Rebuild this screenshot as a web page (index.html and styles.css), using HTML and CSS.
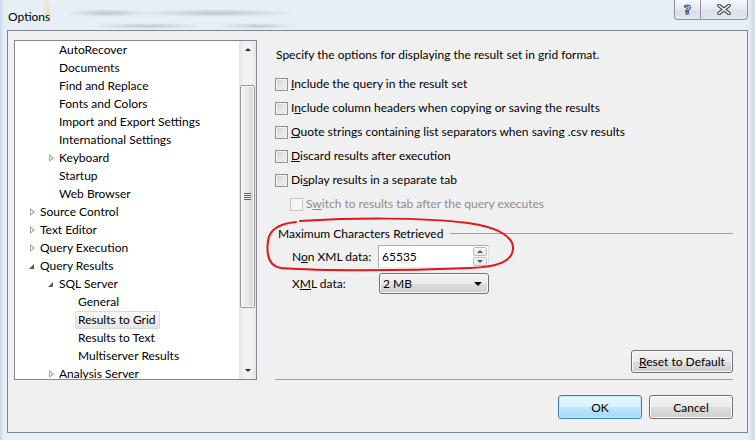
FILE: index.html
```html
<!DOCTYPE html>
<html lang="en">
<head>
    <meta charset="UTF-8">
    <title>Options</title>
    <link rel="stylesheet" href="styles.css">
</head>
<body>
    <div class="window">
        <div class="titlebar">
            <span class="title">Options</span>
            <div class="caption-buttons">
                <span class="cap help">?</span>
                <span class="cap close">
                    <svg width="14" height="11" viewBox="0 0 14 11">
                        <path d="M2 1.5 L12 9.5 M12 1.5 L2 9.5" stroke="#3b4452" stroke-width="3.6" stroke-linecap="round"/>
                        <path d="M2 1.5 L12 9.5 M12 1.5 L2 9.5" stroke="#ffffff" stroke-width="1.6" stroke-linecap="round"/>
                    </svg>
                </span>
            </div>
        </div>

        <div class="client">
            <div class="main">
                <div class="tree">
                    <ul class="nodes">
                        <li class="node l2"><span class="twist"></span><span class="text">AutoRecover</span></li>
                        <li class="node l2"><span class="twist"></span><span class="text">Documents</span></li>
                        <li class="node l2"><span class="twist"></span><span class="text">Find and Replace</span></li>
                        <li class="node l2"><span class="twist"></span><span class="text">Fonts and Colors</span></li>
                        <li class="node l2"><span class="twist"></span><span class="text">Import and Export Settings</span></li>
                        <li class="node l2"><span class="twist"></span><span class="text">International Settings</span></li>
                        <li class="node l2"><span class="twist closed"></span><span class="text">Keyboard</span></li>
                        <li class="node l2"><span class="twist"></span><span class="text">Startup</span></li>
                        <li class="node l2"><span class="twist"></span><span class="text">Web Browser</span></li>
                        <li class="node l1"><span class="twist closed"></span><span class="text">Source Control</span></li>
                        <li class="node l1"><span class="twist closed"></span><span class="text">Text Editor</span></li>
                        <li class="node l1"><span class="twist closed"></span><span class="text">Query Execution</span></li>
                        <li class="node l1"><span class="twist open"></span><span class="text">Query Results</span></li>
                        <li class="node l2"><span class="twist open"></span><span class="text">SQL Server</span></li>
                        <li class="node l3"><span class="twist"></span><span class="text">General</span></li>
                        <li class="node l3"><span class="twist"></span><span class="text selected">Results to Grid</span></li>
                        <li class="node l3"><span class="twist"></span><span class="text">Results to Text</span></li>
                        <li class="node l3"><span class="twist"></span><span class="text">Multiserver Results</span></li>
                        <li class="node l2"><span class="twist closed"></span><span class="text">Analysis Server</span></li>
                    </ul>
                    <div class="scrollbar">
                        <div class="sb-btn"><span class="arrow-up"></span></div>
                        <div class="sb-track">
                            <div class="thumb"><span class="grip"></span></div>
                        </div>
                        <div class="sb-btn"><span class="arrow-down"></span></div>
                    </div>
                </div>

                <div class="panel">
                    <p class="intro">Specify the options for displaying the result set in grid format.</p>

                    <label class="check"><span class="box"></span><span><u>I</u>nclude the query in the result set</span></label>
                    <label class="check"><span class="box"></span><span>I<u>n</u>clude column headers when copying or saving the results</span></label>
                    <label class="check"><span class="box"></span><span><u>Q</u>uote strings containing list separators when saving .csv results</span></label>
                    <label class="check"><span class="box"></span><span><u>D</u>iscard results after execution</span></label>
                    <label class="check"><span class="box"></span><span>Di<u>s</u>play results in a separate tab</span></label>
                    <label class="check sub disabled"><span class="box"></span><span>S<u>w</u>itch to results tab after the query executes</span></label>

                    <div class="group">
                        <div class="group-title"><span>Maximum Characters Retrieved</span><span class="rule"></span></div>
                        <div class="field">
                            <span class="field-label">N<u>o</u>n XML data:</span>
                            <div class="spin">
                                <span class="spin-value">65535</span>
                                <div class="spin-btns">
                                    <span class="spin-btn"><span class="tri-up"></span></span>
                                    <span class="spin-btn"><span class="tri-down"></span></span>
                                </div>
                            </div>
                        </div>
                        <div class="field">
                            <span class="field-label">X<u>M</u>L data:</span>
                            <div class="combo">
                                <span>2 MB</span>
                                <span class="combo-arrow"></span>
                            </div>
                        </div>
                    </div>

                    <div class="reset-row">
                        <button class="btn reset"><u>R</u>eset to Default</button>
                    </div>
                </div>
            </div>

            <div class="footer">
                <button class="btn ok">OK</button>
                <button class="btn">Cancel</button>
            </div>
        </div>

        <svg class="scribble" width="755" height="440" viewBox="0 0 755 440">
            <path d="M300 221 C350 218 420 217 468 223 C498 227 514 237 513 249 C512 261 499 267 470 268 C400 271 320 271 281 268 C269 266 266 256 268 241 C269 231 276 224 296 222"
                  fill="none" stroke="#e3141c" stroke-width="2" stroke-linecap="round"/>
        </svg>
    </div>
</body>
</html>
```

FILE: styles.css
```css
* {
    box-sizing: border-box;
    margin: 0;
    padding: 0;
}

body {
    width: 755px;
    height: 440px;
    overflow: hidden;
    font-family: Lato, "Liberation Sans", sans-serif;
    font-size: 12px;
    color: #000;
}

.window {
    position: relative;
    width: 755px;
    height: 440px;
    padding: 0 7px 7px;
    background:
        linear-gradient(to right, #c9d9ec 0, #e8eef6 4px, #e8eef6 748px, #c9d9ec 755px),
        #dfe8f3;
}

/* title bar with the blurred glass behind it */
.titlebar {
    display: flex;
    justify-content: space-between;
    height: 30px;
    background:
        radial-gradient(ellipse 4px 16px at 40px 12px, rgba(236, 214, 120, 0.55), transparent),
        radial-gradient(ellipse 42px 4px at 100px 13px, rgba(110, 120, 135, 0.35), transparent),
        radial-gradient(ellipse 80px 4px at 210px 13px, rgba(110, 120, 135, 0.35), transparent),
        radial-gradient(ellipse 60px 3px at 140px 26px, rgba(110, 120, 135, 0.3), transparent),
        radial-gradient(ellipse 40px 3px at 250px 26px, rgba(110, 120, 135, 0.3), transparent);
}

.title {
    padding: 9px 0 0 1px;
    font-size: 12px;
    line-height: 15px;
}

.caption-buttons {
    display: flex;
    height: 20px;
}

.cap {
    display: flex;
    align-items: center;
    justify-content: center;
    height: 20px;
    border: 1px solid #8b939e;
    border-top: none;
    background: linear-gradient(#f5f7fa, #e4e9ef 50%, #d8dfe7 51%, #e2e8ee);
}

.help {
    width: 26px;
    border-right: none;
    border-bottom-left-radius: 4px;
    font-family: "DejaVu Sans", sans-serif;
    font-size: 13px;
    font-weight: bold;
    color: #fff;
    -webkit-text-stroke: 1px #3b4452;
}

.close {
    width: 48px;
    border-bottom-right-radius: 4px;
}

.client {
    display: flex;
    flex-direction: column;
    height: 403px;
    padding: 9px 14px 13px 6px;
    border: 1px solid #7d8590;
    background: #f0f0f0;
}

.main {
    display: flex;
    height: 340px;
}

/* tree view */
.tree {
    display: flex;
    width: 243px;
    height: 340px;
    border: 1px solid #828790;
    background: #fff;
}

.nodes {
    flex: 1;
    list-style: none;
    overflow: hidden;
}

.node {
    display: flex;
    align-items: center;
    height: 18px;
    white-space: nowrap;
}

.l1 { padding-left: 9px; }
.l2 { padding-left: 28px; }
.l3 { padding-left: 47px; }

.twist {
    position: relative;
    width: 16px;
    height: 16px;
    flex-shrink: 0;
}

.twist.closed::before {
    content: "";
    position: absolute;
    left: 6px;
    top: 4px;
    border-left: 5px solid #a6a6a6;
    border-top: 4px solid transparent;
    border-bottom: 4px solid transparent;
}

.twist.closed::after {
    content: "";
    position: absolute;
    left: 7px;
    top: 6px;
    border-left: 2px solid #fff;
    border-top: 2px solid transparent;
    border-bottom: 2px solid transparent;
}

.twist.open::before {
    content: "";
    position: absolute;
    left: 5px;
    top: 6px;
    border-right: 5px solid #595959;
    border-top: 5px solid transparent;
}

.text {
    line-height: 16px;
    padding: 0 2px 0 0;
}

.selected {
    margin-left: -3px;
    padding: 0 3px 0 2px;
    border: 1px solid #d9d9d9;
    border-radius: 2px;
    background: linear-gradient(#f8f8f8, #e5e5e5);
}

/* scroll bar */
.scrollbar {
    display: flex;
    flex-direction: column;
    width: 17px;
    background: linear-gradient(to right, #e3e3e3, #f2f2f2 30%, #f2f2f2 70%, #e6e6e6);
}

.sb-btn {
    display: flex;
    align-items: center;
    justify-content: center;
    height: 17px;
}

.arrow-up {
    border-bottom: 3px solid #2b2b2b;
    border-left: 3.5px solid transparent;
    border-right: 3.5px solid transparent;
}

.arrow-down {
    border-top: 3px solid #2b2b2b;
    border-left: 3.5px solid transparent;
    border-right: 3.5px solid transparent;
}

.sb-track {
    flex: 1;
    padding: 27px 0 0 1px;
}

.thumb {
    display: flex;
    align-items: center;
    justify-content: center;
    width: 15px;
    height: 223px;
    border: 1px solid #979797;
    border-radius: 2px;
    background: linear-gradient(to right, #f4f4f4, #e6e6e6 50%, #d3d3d3);
    box-shadow: inset 0 0 0 1px #fbfbfb;
}

.grip {
    width: 7px;
    height: 7px;
    background: repeating-linear-gradient(#5f5f5f 0 1px, #f0f0f0 1px 2px);
}

/* right panel */
.panel {
    display: flex;
    flex-direction: column;
    flex: 1;
    margin-left: 18px;
    padding-top: 7px;
    border-bottom: 1px solid #a0a0a0;
}

.intro {
    line-height: 16px;
    margin-left: 1px;
    margin-bottom: 13px;
}

.check {
    display: flex;
    align-items: center;
    gap: 3px;
    height: 16px;
    margin-bottom: 8px;
    line-height: 16px;
    white-space: nowrap;
}

.box {
    width: 13px;
    height: 13px;
    flex-shrink: 0;
    border: 1px solid #8f8f8f;
    background: linear-gradient(135deg, #cfd3d8, #f7f7f7);
    box-shadow: inset 0 0 0 1px #f6f6f6, inset 0 0 0 2px #e2e2e2;
}

.sub {
    margin-left: 15px;
}

.disabled {
    color: #8d8d8d;
}

.disabled .box {
    border-color: #c6c6c6;
    background: #f4f4f4;
    box-shadow: none;
}

.group {
    margin-top: 5px;
}

.group-title {
    display: flex;
    align-items: center;
    gap: 7px;
    height: 16px;
    padding-left: 3px;
}

.rule {
    flex: 1;
    height: 1px;
    background: #a0a0a0;
}

.field {
    display: flex;
    align-items: center;
    margin-top: 4px;
    padding-left: 17px;
}

.field + .field {
    margin-top: 5px;
}

.field-label {
    width: 86px;
}

.spin {
    display: flex;
    align-items: center;
    justify-content: space-between;
    width: 111px;
    height: 23px;
    padding: 0 1px 0 3px;
    border: 1px solid #abadb3;
    border-right-color: #dbdfe6;
    border-bottom-color: #e3e9ef;
    background: #fff;
}

.spin-btns {
    display: flex;
    flex-direction: column;
    gap: 1px;
}

.spin-btn {
    display: flex;
    align-items: center;
    justify-content: center;
    width: 14px;
    height: 9px;
    border: 1px solid #b7bcc6;
    border-radius: 2px;
    background: linear-gradient(#f7f8fa, #e6e9ee);
}

.tri-up {
    border-bottom: 3px solid #4c5a75;
    border-left: 3px solid transparent;
    border-right: 3px solid transparent;
}

.tri-down {
    border-top: 3px solid #4c5a75;
    border-left: 3px solid transparent;
    border-right: 3px solid transparent;
}

.combo {
    display: flex;
    align-items: center;
    justify-content: space-between;
    width: 110px;
    height: 21px;
    margin-left: 1px;
    padding: 0 6px 0 3px;
    border: 1px solid #707070;
    border-radius: 3px;
    background: linear-gradient(#f2f2f2, #ebebeb 50%, #dddddd 51%, #cfcfcf);
    box-shadow: inset 0 0 0 1px #fcfcfc;
}

.combo-arrow {
    border-top: 4px solid #000;
    border-left: 4px solid transparent;
    border-right: 4px solid transparent;
}

.reset-row {
    display: flex;
    justify-content: flex-end;
    margin-top: auto;
    margin-bottom: 6px;
}

/* buttons */
.btn {
    height: 23px;
    border: 1px solid #707070;
    border-radius: 3px;
    background: linear-gradient(#f2f2f2, #ebebeb 50%, #dddddd 51%, #cfcfcf);
    box-shadow: inset 0 0 0 1px #fbfbfb;
    font-family: inherit;
    font-size: 12px;
    color: #000;
}

.reset {
    width: 102px;
}

.footer {
    display: flex;
    justify-content: flex-end;
    gap: 7px;
    margin-top: 15px;
}

.footer .btn {
    width: 84px;
    height: 24px;
}

.ok {
    border-color: #3c7fb1;
    background: linear-gradient(#eaf6fd, #d9f0fc 50%, #bee6fd 51%, #a7d9f5);
    box-shadow: inset 0 0 0 1px #c5e7fa;
}

.scribble {
    position: absolute;
    left: 0;
    top: 0;
    pointer-events: none;
}
```
